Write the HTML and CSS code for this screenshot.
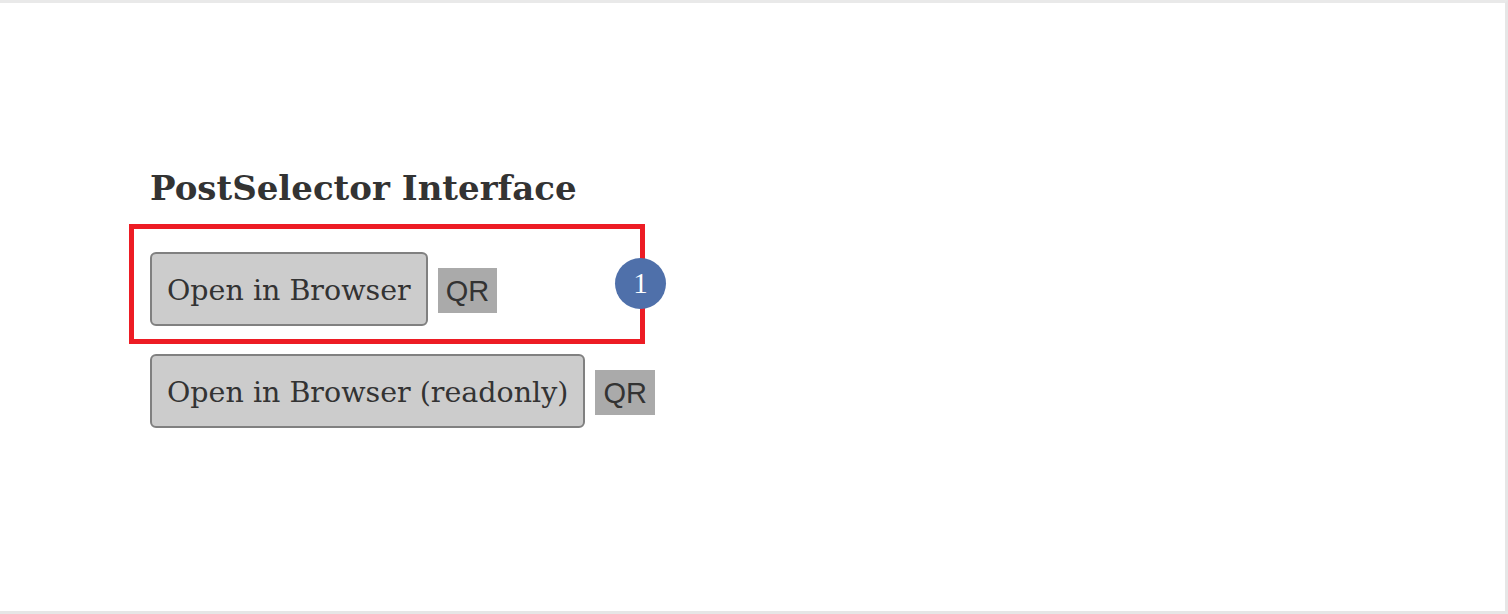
FILE: index.html
```html
<!DOCTYPE html>
<html>
<head>
<meta charset="utf-8">
<link rel="stylesheet" href="styles.css">
</head>
<body>
<div class="frame">
  <div class="content">
    <h1 class="title">PostSelector Interface</h1>
    <div class="rows">
      <div class="row">
        <button class="open-btn">Open in Browser</button>
        <span class="qr">QR</span>
        <div class="highlight"></div>
        <div class="badge">1</div>
      </div>
      <div class="row">
        <button class="open-btn">Open in Browser (readonly)</button>
        <span class="qr">QR</span>
      </div>
    </div>
  </div>
</div>
</body>
</html>
```

FILE: styles.css
```css
html, body {
  margin: 0;
  padding: 0;
  background: #ffffff;
}
.frame {
  box-sizing: border-box;
  width: 1508px;
  height: 614px;
  border-top: 3px solid #e9e9e9;
  border-right: 3px solid #e6e6e6;
  border-bottom: 3px solid #e6e6e6;
  background: #ffffff;
}
.content {
  padding: 165px 0 0 150px;
  color: #333333;
  font-family: "DejaVu Serif", "Liberation Serif", serif;
}
.title {
  margin: 0;
  font-size: 34px;
  line-height: 40px;
  font-weight: bold;
  color: #333333;
}
.rows {
  margin-top: 44px;
  display: flex;
  flex-direction: column;
  gap: 28px;
}
.row {
  position: relative;
  display: flex;
  align-items: center;
  gap: 10px;
}
.open-btn {
  box-sizing: border-box;
  height: 74px;
  padding: 2px 15px 0;
  font-family: "DejaVu Serif", "Liberation Serif", serif;
  font-size: 28.5px;
  color: #333333;
  background: #cccccc;
  border: 2px solid #808080;
  border-radius: 6px;
}
.qr {
  display: inline-block;
  height: 45px;
  line-height: 47px;
  padding: 0 8px;
  margin-top: 2px;
  background: #aaaaaa;
  color: #333333;
  font-family: "Liberation Sans", Arial, sans-serif;
  font-size: 29px;
}
.highlight {
  position: absolute;
  left: -21px;
  top: -28px;
  width: 516px;
  height: 120px;
  box-sizing: border-box;
  border: 5px solid #ed1c24;
}
.badge {
  position: absolute;
  left: 465px;
  top: 6px;
  width: 51px;
  height: 51px;
  border-radius: 50%;
  background: #4f70aa;
  color: #ffffff;
  font-family: "Liberation Serif", "DejaVu Serif", serif;
  font-size: 29px;
  line-height: 51px;
  text-align: center;
}
```
